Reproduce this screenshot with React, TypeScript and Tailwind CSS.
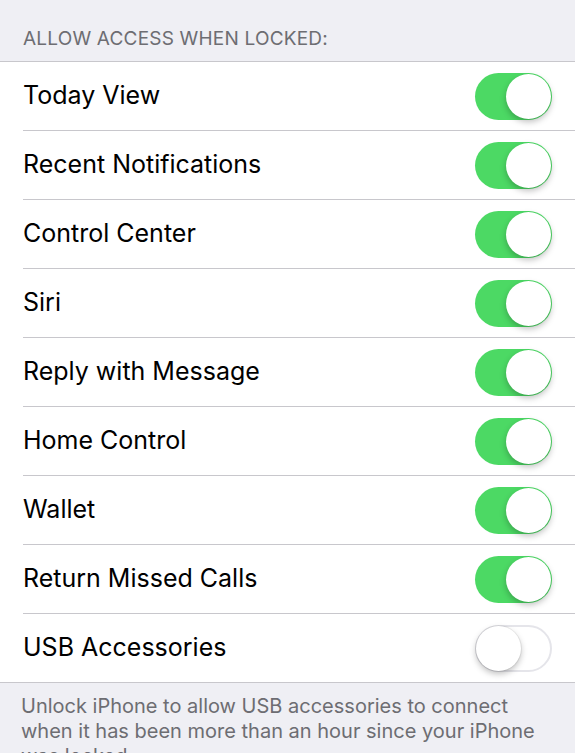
import React from "react";

const items: { label: string; on: boolean }[] = [
  { label: "Today View", on: true },
  { label: "Recent Notifications", on: true },
  { label: "Control Center", on: true },
  { label: "Siri", on: true },
  { label: "Reply with Message", on: true },
  { label: "Home Control", on: true },
  { label: "Wallet", on: true },
  { label: "Return Missed Calls", on: true },
  { label: "USB Accessories", on: false },
];

function Toggle({ on }: { on: boolean }) {
  return (
    <div
      className={
        on
          ? "relative w-[77px] h-[47px] rounded-full bg-[#4cd964]"
          : "relative w-[77px] h-[47px] rounded-full bg-white border-2 border-[#e5e5ea]"
      }
    >
      <div
        className={
          on
            ? "absolute top-[1px] right-[1px] w-[45px] h-[45px] rounded-full bg-white shadow-[0_3px_6px_rgba(0,0,0,0.25)]"
            : "absolute top-[-1px] left-[-1px] w-[45px] h-[45px] rounded-full bg-white shadow-[0_3px_6px_rgba(0,0,0,0.25),0_0_0_1px_rgba(0,0,0,0.06)]"
        }
      />
    </div>
  );
}

export default function App() {
  return (
    <div
      className="w-[575px] h-[753px] overflow-hidden bg-[#efeff4]"
      style={{ fontFamily: "Inter, 'Liberation Sans', sans-serif" }}
    >
      <div className="h-[61px] flex items-end pl-[23px] pb-[8px] text-[19px] text-[#6d6d72] tracking-[0.2px]">
        ALLOW ACCESS WHEN LOCKED:
      </div>
      <div className="bg-white border-t border-b border-[#c8c7cc]">
        {items.map((it, i) => (
          <div key={it.label} className="pl-[23px]">
            <div
              className={
                i < items.length - 1
                  ? "h-[69px] flex items-center justify-between pr-[23px] border-b border-[#c8c7cc]"
                  : "h-[68px] flex items-center justify-between pr-[23px]"
              }
            >
              <span className="text-[25px] text-black">{it.label}</span>
              <Toggle on={it.on} />
            </div>
          </div>
        ))}
      </div>
      <div className="pl-[21px] pr-[40px] pt-[11px] text-[20px] leading-[25px] text-[#6d6d72]">
        Unlock iPhone to allow USB accessories to connect when it has been more than an hour since your iPhone was locked.
      </div>
    </div>
  );
}
